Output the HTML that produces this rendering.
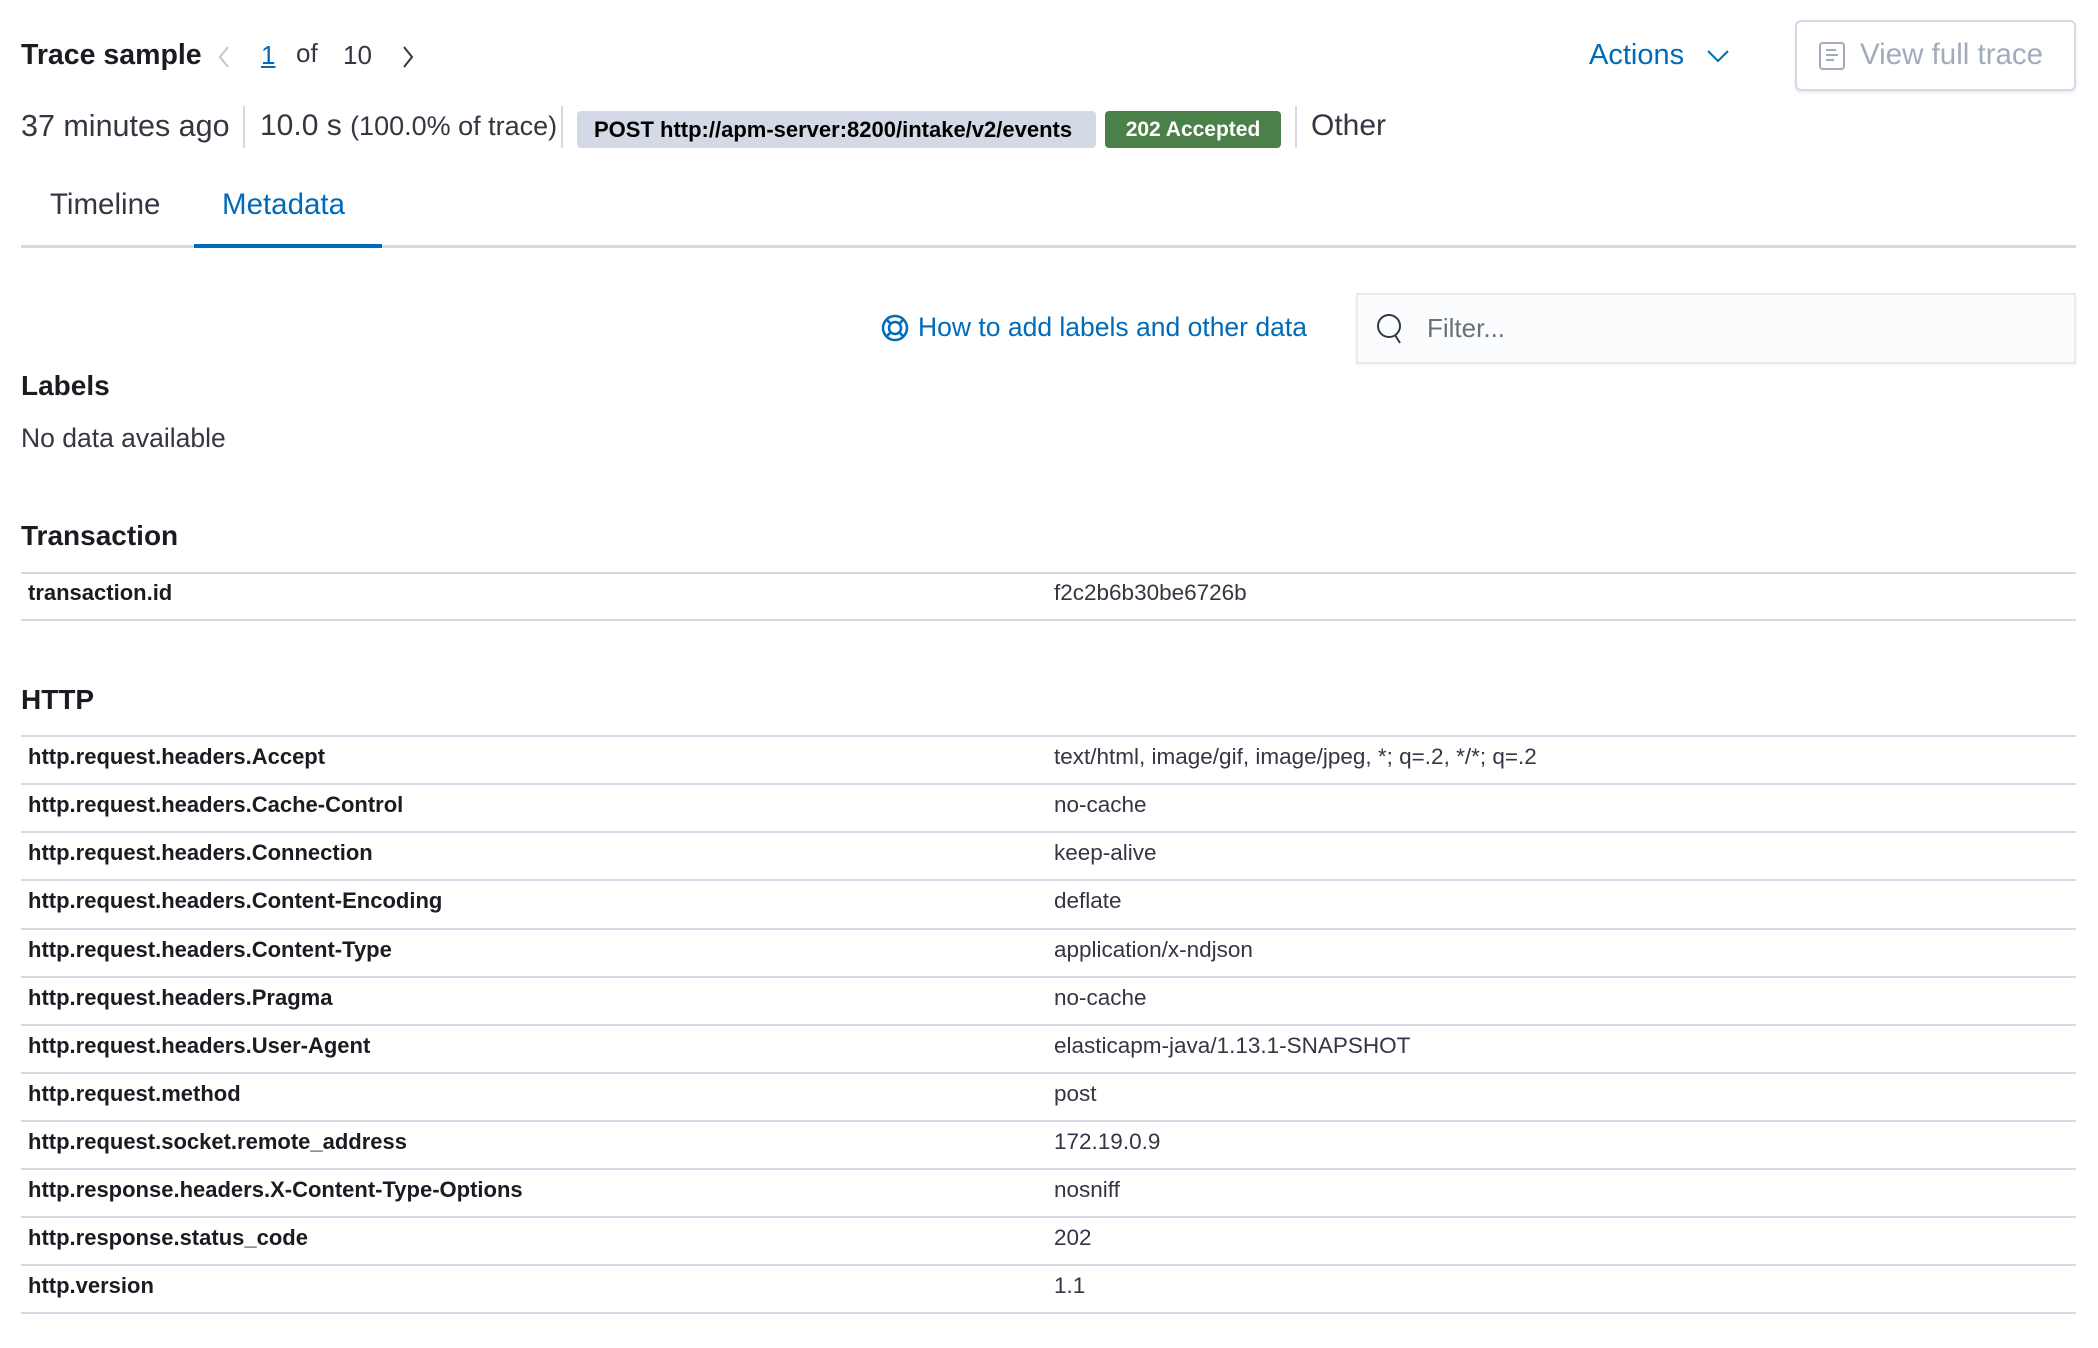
<!DOCTYPE html>
<html><head><meta charset="utf-8"><style>
*{margin:0;padding:0;box-sizing:border-box}
body{width:2098px;height:1348px;background:#fff;font-family:"Liberation Sans",sans-serif;color:#343741;position:relative;overflow:hidden}
.a{position:absolute;white-space:nowrap}
.vl{position:absolute;width:2px;background:#d3dae6}
.hl{position:absolute;left:21px;width:2055px;height:2px;background:#d3dae6}
.k{position:absolute;left:28px;font-weight:bold;font-size:22px;color:#1a1c21}
.v{position:absolute;left:1054px;font-size:22.5px;color:#343741}
h2{position:absolute;left:21px;font-size:28px;font-weight:bold;color:#1a1c21}
</style></head><body>
<div class="a" style="left:21px;top:39px;font-size:28.5px;font-weight:bold;color:#1a1c21">Trace sample</div>
<svg class="a" style="left:216px;top:45px" width="16" height="24"><path d="M12 2 L4 12 L12 22" stroke="#c2c7d0" stroke-width="2" fill="none"/></svg>
<div class="a" style="left:261px;top:40px;font-size:26px;color:#006bb8;text-decoration:underline">1</div>
<div class="a" style="left:296px;top:38px;font-size:26px;color:#343741">of</div>
<div class="a" style="left:343px;top:40px;font-size:26px;color:#343741">10</div>
<svg class="a" style="left:400px;top:45px" width="16" height="24"><path d="M4 2 L12 12 L4 22" stroke="#343741" stroke-width="2" fill="none"/></svg>
<div class="a" style="left:1589px;top:39px;font-size:29px;color:#006bb8">Actions</div>
<svg class="a" style="left:1706px;top:48px" width="24" height="16"><path d="M2 3 L12 13 L22 3" stroke="#006bb8" stroke-width="2" fill="none"/></svg>
<div class="a" style="left:1795px;top:20px;width:281px;height:71px;border:2px solid #d3dae6;border-radius:6px;box-shadow:0 2px 3px rgba(0,0,0,.08)"></div>
<svg class="a" style="left:1818px;top:41px" width="30" height="30"><rect x="2" y="2" width="24" height="26" rx="3" stroke="#a2abba" stroke-width="2" fill="none"/><path d="M8 9h10M8 14h12M8 19h8" stroke="#a2abba" stroke-width="2"/></svg>
<div class="a" style="left:1860px;top:38px;font-size:29.5px;color:#a2abba">View full trace</div>

<div class="a" style="left:21px;top:109px;font-size:30.5px;color:#343741">37 minutes ago</div>
<div class="vl" style="left:243px;top:106px;height:42px"></div>
<div class="a" style="left:260px;top:109px;font-size:30px;color:#343741">10.0 s <span style="font-size:27px">(100.0% of trace)</span></div>
<div class="vl" style="left:561px;top:106px;height:42px"></div>
<div class="a" style="left:577px;top:111px;width:519px;height:37px;background:#d3dae6;border-radius:4px;font-size:22px;font-weight:bold;color:#000;line-height:37px;padding-left:17px">POST http://apm-server:8200/intake/v2/events</div>
<div class="a" style="left:1105px;top:111px;width:176px;height:37px;background:#4b8049;border-radius:4px;font-size:21px;font-weight:bold;color:#fff;line-height:37px;text-align:center">202 Accepted</div>
<div class="vl" style="left:1295px;top:106px;height:42px"></div>
<div class="a" style="left:1311px;top:109px;font-size:30px;color:#343741">Other</div>

<div class="a" style="left:50px;top:188px;font-size:29.5px;color:#343741">Timeline</div>
<div class="a" style="left:222px;top:188px;font-size:29.5px;color:#006bb8">Metadata</div>
<div class="hl" style="top:245px;height:3px"></div>
<div class="a" style="left:194px;top:244px;width:188px;height:4px;background:#006bb8"></div>

<svg class="a" style="left:881px;top:314px" width="28" height="28"><circle cx="14" cy="14" r="12" stroke="#006bb8" stroke-width="2.5" fill="none"/><circle cx="14" cy="14" r="6" stroke="#006bb8" stroke-width="2.5" fill="none"/><path d="M6 6l4 4M22 6l-4 4M6 22l4-4M22 22l-4-4" stroke="#006bb8" stroke-width="2.5"/></svg>
<div class="a" style="left:918px;top:312px;font-size:26.5px;color:#006bb8">How to add labels and other data</div>
<div class="a" style="left:1356px;top:293px;width:720px;height:71px;background:#fbfcfd;border:2px solid #e8ebf0;box-shadow:0 1px 2px rgba(0,0,0,.06)"></div>
<svg class="a" style="left:1376px;top:312px" width="30" height="34"><circle cx="13" cy="14" r="11" stroke="#343741" stroke-width="2" fill="none"/><path d="M19 23l5 8" stroke="#343741" stroke-width="2"/></svg>
<div class="a" style="left:1427px;top:313px;font-size:26px;color:#69707d">Filter...</div>

<h2 style="top:370px">Labels</h2>
<div class="a" style="left:21px;top:423px;font-size:26.5px;color:#343741">No data available</div>

<h2 style="top:520px">Transaction</h2>
<div class="hl" style="top:572px"></div>
<div class="k" style="top:580px">transaction.id</div><div class="v" style="top:580px">f2c2b6b30be6726b</div>
<div class="hl" style="top:619px"></div>

<h2 style="top:684px">HTTP</h2>
<div class="hl" style="top:735px"></div>
<div class="k" style="top:744px">http.request.headers.Accept</div><div class="v" style="top:744px">text/html, image/gif, image/jpeg, *; q=.2, */*; q=.2</div>
<div class="hl" style="top:783px"></div>
<div class="k" style="top:792px">http.request.headers.Cache-Control</div><div class="v" style="top:792px">no-cache</div>
<div class="hl" style="top:831px"></div>
<div class="k" style="top:840px">http.request.headers.Connection</div><div class="v" style="top:840px">keep-alive</div>
<div class="hl" style="top:879px"></div>
<div class="k" style="top:888px">http.request.headers.Content-Encoding</div><div class="v" style="top:888px">deflate</div>
<div class="hl" style="top:928px"></div>
<div class="k" style="top:937px">http.request.headers.Content-Type</div><div class="v" style="top:937px">application/x-ndjson</div>
<div class="hl" style="top:976px"></div>
<div class="k" style="top:985px">http.request.headers.Pragma</div><div class="v" style="top:985px">no-cache</div>
<div class="hl" style="top:1024px"></div>
<div class="k" style="top:1033px">http.request.headers.User-Agent</div><div class="v" style="top:1033px">elasticapm-java/1.13.1-SNAPSHOT</div>
<div class="hl" style="top:1072px"></div>
<div class="k" style="top:1081px">http.request.method</div><div class="v" style="top:1081px">post</div>
<div class="hl" style="top:1120px"></div>
<div class="k" style="top:1129px">http.request.socket.remote_address</div><div class="v" style="top:1129px">172.19.0.9</div>
<div class="hl" style="top:1168px"></div>
<div class="k" style="top:1177px">http.response.headers.X-Content-Type-Options</div><div class="v" style="top:1177px">nosniff</div>
<div class="hl" style="top:1216px"></div>
<div class="k" style="top:1225px">http.response.status_code</div><div class="v" style="top:1225px">202</div>
<div class="hl" style="top:1264px"></div>
<div class="k" style="top:1273px">http.version</div><div class="v" style="top:1273px">1.1</div>
<div class="hl" style="top:1312px"></div>
</body></html>
